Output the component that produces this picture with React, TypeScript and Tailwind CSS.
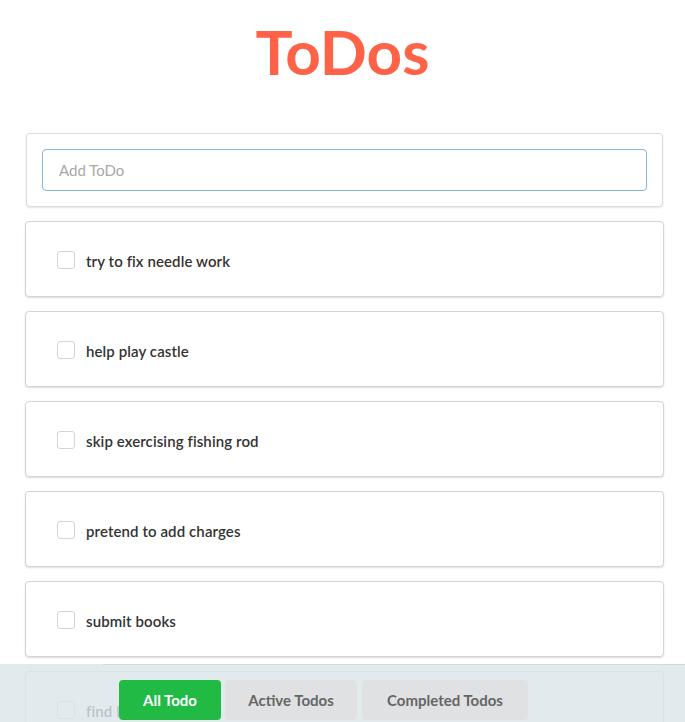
import React, { useState } from 'react';

const initialTodos = [
  'try to fix needle work',
  'help play castle',
  'skip exercising fishing rod',
  'pretend to add charges',
  'submit books',
  'find light bulbs',
];

const TodoCard: React.FC<{ text: string }> = ({ text }) => (
  <div className="h-[76px] bg-white border border-[#d4d4d5] rounded-[4px] shadow-[0_1px_2px_0_rgba(34,36,38,0.15)] flex items-center px-[31px]">
    <span className="w-[18px] h-[18px] mt-[2px] border border-[#d4d4d5] rounded-[3px] bg-white shrink-0" />
    <span className="ml-[11px] text-[15px] font-semibold text-[#333] leading-none pt-[4px] tracking-[0.1px]">{text}</span>
  </div>
);

export default function App() {
  const [filter, setFilter] = useState('all');
  const [value, setValue] = useState('');

  const tabs = [
    { id: 'all', label: 'All Todo', w: 'w-[102px]' },
    { id: 'active', label: 'Active Todos', w: 'w-[132px]' },
    { id: 'completed', label: 'Completed Todos', w: 'w-[166px] ml-[1px]' },
  ];

  return (
    <div className="min-h-screen bg-white font-['Lato','Liberation_Sans',sans-serif] pb-[80px]">
      <h1 className="text-center text-[62px] font-bold text-[#ff6347] leading-none pt-[20px] pb-[51px]">ToDos</h1>

      <div className="ml-[25px] w-[639px] flex flex-col gap-[14px]">
        <div className="mx-[1px] h-[74px] bg-white border border-[#dcdcdd] rounded-[4px] shadow-[0_1px_2px_0_rgba(34,36,38,0.12)] px-[15px] flex items-center">
          <input
            autoFocus
            value={value}
            onChange={(e) => setValue(e.target.value)}
            placeholder="Add ToDo"
            className="w-full h-[42px] border border-[#85b7d9] rounded-[4px] px-[16px] text-[15px] text-[#333] outline-none placeholder:text-[#a8a8a8] caret-black"
          />
        </div>
        {initialTodos.map((t) => (
          <TodoCard key={t} text={t} />
        ))}
      </div>

      <div className="fixed bottom-0 left-0 right-0 h-[58px] bg-[#dce5ea]/80">
        <div className="ml-[103px] h-px bg-[#d3dadd]" />
        <div className="flex gap-[4px] pl-[119px] pt-[15px]">
          {tabs.map((t) => (
            <button
              key={t.id}
              onClick={() => setFilter(t.id)}
              className={
                (filter === t.id
                  ? 'bg-[#21ba45] text-white '
                  : 'bg-[#e0e1e2] text-[#666] ') +
                t.w +
                ' h-[40px] rounded-[4px] text-[15px] font-bold'
              }
            >
              {t.label}
            </button>
          ))}
        </div>
      </div>
    </div>
  );
}
